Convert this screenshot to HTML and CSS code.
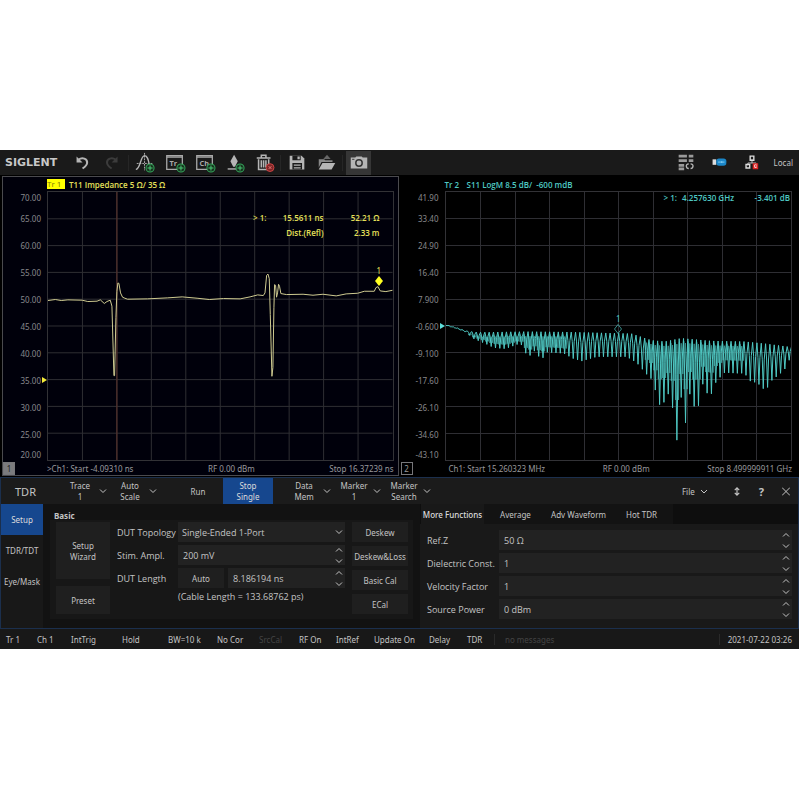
FILE: index.html
```html
<!DOCTYPE html>
<html lang="en">
<head>
    <meta charset="UTF-8">
    <meta name="viewport" content="width=device-width, initial-scale=1.0">
    <title>SIGLENT TDR</title>
    <link rel="stylesheet" href="styles.css">
</head>
<body>
    <!-- shared icon shapes -->
    <svg class="defs" width="0" height="0" aria-hidden="true">
        <symbol id="down" viewBox="0 0 8 8"><path d="M1 2.5 4 5.5 7 2.5" fill="none" stroke="currentColor"/></symbol>
        <symbol id="up" viewBox="0 0 8 8"><path d="M1 5.5 4 2.5 7 5.5" fill="none" stroke="currentColor"/></symbol>
        <symbol id="plus" viewBox="0 0 10 10"><circle cx="5" cy="5" r="4" fill="#16331f" stroke="#35a65a"/><path d="M5 2.500V7.500M2.500 5H7.500" stroke="#4cc774"/></symbol>
    </svg>

    <div class="app">
        <header class="toolbar">
            <span class="logo">SIGLENT</span>
            <button class="tool" aria-label="Undo"><svg viewBox="0 0 24 24"><path d="M5 5V11.500H11.500Z" fill="#b5b5b5"/><path d="M7 8.500C11 5.500 17 7 16.500 12 16.300 14.500 14.500 16 11.500 18" fill="none" stroke="#b5b5b5" stroke-width="2.200"/></svg></button>
            <button class="tool" aria-label="Redo"><svg viewBox="0 0 24 24"><path d="M17 5V11.500H10.500Z" fill="#3c3c3c"/><path d="M15 8.500C11 5.500 5 7 5.500 12 5.700 14.500 7.500 16 10.500 18" fill="none" stroke="#3c3c3c" stroke-width="2.200"/></svg></button>
            <span class="sep"></span>
            <button class="tool" aria-label="Add trace"><svg viewBox="0 0 24 24"><path d="M2 19C7 19 7 4 11.500 4S16 13 18 19" fill="none" stroke="#b5b5b5" stroke-width="1.500"/><path d="M11.500 1V20M3 12.500H20" stroke="#b5b5b5" stroke-dasharray="2 1"/><use href="#plus" x="12" y="12" width="11" height="11"/></svg></button>
            <button class="tool" aria-label="Add trace window"><svg viewBox="0 0 24 24"><path d="M3 4H20V19H3ZM3 5.500H20" fill="none" stroke="#aaa" stroke-width="1.400"/><text x="6" y="15" class="icon-text">Tr</text><use href="#plus" x="13" y="12" width="11" height="11"/></svg></button>
            <button class="tool" aria-label="Add channel window"><svg viewBox="0 0 24 24"><path d="M3 4H20V19H3ZM3 5.500H20" fill="none" stroke="#aaa" stroke-width="1.400"/><text x="6" y="15" class="icon-text">Ch</text><use href="#plus" x="13" y="12" width="11" height="11"/></svg></button>
            <button class="tool" aria-label="Add marker"><svg viewBox="0 0 24 24"><path d="M11 3 15 10 12 16H10L7 10Z" fill="#b5b5b5"/><path d="M4 18.500H14" stroke="#b5b5b5" stroke-width="1.500"/><use href="#plus" x="12" y="12" width="11" height="11"/></svg></button>
            <button class="tool" aria-label="Delete"><svg viewBox="0 0 24 24"><path d="M3 6.500H18M8 6V3.500H13V6M5 8V19H16V8M8 9V17M10.500 9V17M13 9V17" fill="none" stroke="#b5b5b5" stroke-width="1.700"/><circle cx="17.500" cy="17" r="4.300" fill="#7e2626" stroke="#d14747"/><path d="M16 15.500 19 18.500M19 15.500 16 18.500" stroke="#ee7777"/></svg></button>
            <span class="sep"></span>
            <button class="tool" aria-label="Save"><svg viewBox="0 0 24 24"><path d="M4 4H17L20 7V19H4Z" fill="#b5b5b5"/><path d="M7 4H16V9H7ZM7 12H17.500V19H7Z" fill="#1a1a1a"/><path d="M12.500 5H15V8H12.500ZM8.500 13.500H16V15H8.500ZM8.500 16.500H16V18H8.500Z" fill="#b5b5b5"/></svg></button>
            <button class="tool" aria-label="Open"><svg viewBox="0 0 24 24"><path d="M3 8H9L10 9H18V11H6L3 17Z" fill="#888"/><path d="M7 12H21L17 19H3Z" fill="#b5b5b5"/><path d="M8 7.500 12 3 16 7.500Z" fill="#666"/></svg></button>
            <span class="sep"></span>
            <button class="tool active" aria-label="Screenshot"><svg viewBox="0 0 24 24"><path d="M3 6H8L9 5H15L16 6H21V18H3Z" fill="#b5b5b5"/><circle cx="12" cy="12" r="3.500" fill="#b5b5b5" stroke="#333" stroke-width="1.600"/><path d="M4.500 8H7" stroke="#333"/></svg></button>
            <div class="tray">
                <svg viewBox="0 0 24 24"><path d="M4 4.500H13M4 9.500H13M4 14.500H10M4 18.500H10M15 4.500H20M15 9.500H20" stroke="#9a9a9a" stroke-width="3"/><path d="M15 13C11 13 12 18 15 18M17 13C21 13 20 18 17 18" fill="none" stroke="#b5b5b5" stroke-width="1.500"/></svg>
                <svg viewBox="0 0 24 24"><rect x="5" y="8" width="4" height="6" fill="#ddd"/><rect x="9" y="7" width="11" height="8" rx="3" fill="#1b87c9"/><path d="M11 11H18M15 10V12" stroke="#8ad0f5"/></svg>
                <svg viewBox="0 0 24 24"><path d="M12 8V12M7.500 15V12H16.500V15" fill="none" stroke="#ccc"/><path d="M10 4.500H14V9H10ZM5.500 13.500H9.500V17.500H5.500Z" fill="none" stroke="#ddd" stroke-width="1.500"/><path d="M13.500 13H18V18H13.500Z" fill="#fff" stroke="#d22" stroke-width="1.500"/><path d="M14.500 13.500 17.500 17M17.500 13.500 14.500 17" stroke="#d22"/></svg>
                <span>Local</span>
            </div>
        </header>

        <main class="windows">
            <section class="window selected">
                <div class="trace-title yellow"><mark>Tr 1</mark><span>T11 Impedance 5 Ω/ 35 Ω</span></div>
                <div class="axis"><span>70.00</span><span>65.00</span><span>60.00</span><span>55.00</span><span>50.00</span><span>45.00</span><span>40.00</span><span>35.00</span><span>30.00</span><span>25.00</span><span>20.00</span></div>
                <div class="plot">
                    <svg viewBox="0 0 1040 810" preserveAspectRatio="none">
                        <path class="grid" d="M104 0V810M208 0V810M312 0V810M416 0V810M520 0V810M624 0V810M728 0V810M832 0V810M936 0V810M0 81H1040M0 162H1040M0 243H1040M0 324H1040M0 405H1040M0 486H1040M0 567H1040M0 648H1040M0 729H1040"/>
                        <path class="zero" d="M208 0V810"/>
                        <path class="trace yellow" d="M0 328 22 325 40 328 60 326 103 327 120 331 148 330 158 326 170 337 178 331 188 327 193 345 199 555 201 555 205 380 208 300 211 275 214 276 219 305 225 318 232 321 240 324 300 323 360 320 405 317 450 321 487 325 530 322 580 323 610 317 633 311 650 313 655 305 660 252 664 248 668 262 671 370 676 557 679 530 682 350 684 280 687 282 690 318 693 305 696 279 699 285 703 307 720 310 770 309 800 312 830 309 870 314 900 308 935 306 955 300 985 300 990 289 996 286 1003 299 1020 301 1040 297"/>
                    </svg>
                    <i class="ref" style="top: 70%"></i>
                    <table class="readout yellow">
                        <tr><td>&gt; 1:</td><td>15.5611 ns</td><td>52.21 Ω</td></tr>
                        <tr><td></td><td>Dist.(Refl)</td><td>2.33 m</td></tr>
                    </table>
                    <div class="marker yellow" style="left: 96%; top: 35%"><span>1</span><svg viewBox="0 0 8 10"><path d="M4 0 8 5 4 10 0 5Z" fill="#ff2"/></svg></div>
                </div>
                <span class="number">1</span>
                <div class="sweep"><span>&gt;Ch1: Start -4.09310 ns</span><span>RF 0.00 dBm</span><span>Stop 16.37239 ns</span></div>
            </section>

            <section class="window">
                <div class="trace-title cyan"><b>Tr 2</b><span>S11 LogM 8.5 dB/&nbsp; -600 mdB</span></div>
                <div class="axis"><span>41.90</span><span>33.40</span><span>24.90</span><span>16.40</span><span>7.900</span><span>-0.600</span><span>-9.100</span><span>-17.60</span><span>-26.10</span><span>-34.60</span><span>-43.10</span></div>
                <div class="plot">
                    <svg viewBox="0 0 1040 810" preserveAspectRatio="none">
                        <path class="grid" d="M104 0V810M208 0V810M312 0V810M416 0V810M520 0V810M624 0V810M728 0V810M832 0V810M936 0V810M0 81H1040M0 162H1040M0 243H1040M0 324H1040M0 405H1040M0 486H1040M0 567H1040M0 648H1040M0 729H1040"/>
                        <path class="trace cyan dim" id="ripple2"/>
                        <path class="trace cyan" id="ripple1"/>
                    </svg>
                    <i class="ref cyan" style="top: 50%"></i>
                    <table class="readout wide cyan">
                        <tr><td>&gt; 1:</td><td>4.257630 GHz</td><td>-3.401 dB</td></tr>
                    </table>
                    <div class="marker cyan" style="left: 50%; top: 53%"><span>1</span><svg viewBox="0 0 8 10"><path d="M4 .5 7.500 5 4 9.500 .5 5Z" fill="none" stroke="currentColor" stroke-width=".7"/></svg></div>
                </div>
                <span class="number">2</span>
                <div class="sweep second"><span>Ch1: Start 15.260323 MHz</span><span>RF 0.00 dBm</span><span>Stop 8.499999911 GHz</span></div>
            </section>
        </main>

        <section class="panel">
            <div class="menu">
                <h1>TDR</h1>
                <button class="menu-btn drop"><span>Trace<br>1</span><svg><use href="#down"/></svg></button>
                <button class="menu-btn drop"><span>Auto<br>Scale</span><svg><use href="#down"/></svg></button>
                <button class="menu-btn spaced">Run</button>
                <button class="menu-btn on">Stop<br>Single</button>
                <button class="menu-btn drop spaced"><span>Data<br>Mem</span><svg><use href="#down"/></svg></button>
                <button class="menu-btn drop"><span>Marker<br>1</span><svg><use href="#down"/></svg></button>
                <button class="menu-btn drop"><span>Marker<br>Search</span><svg><use href="#down"/></svg></button>
                <div class="menu-right">
                    <button class="file">File <svg><use href="#down"/></svg></button>
                    <button aria-label="Resize"><svg viewBox="0 0 8 10"><path d="M4 1V9M1.500 3.500 4 1 6.500 3.500M1.500 6.500 4 9 6.500 6.500" fill="none" stroke="currentColor" stroke-width="1.300"/></svg></button>
                    <button class="help">?</button>
                    <button aria-label="Close"><svg viewBox="0 0 8 8"><path d="M0 0 8 8M8 0 0 8" stroke="currentColor"/></svg></button>
                </div>
            </div>

            <div class="panel-body">
                <nav class="side">
                    <button class="on">Setup</button>
                    <button>TDR/TDT</button>
                    <button>Eye/Mask</button>
                </nav>

                <div class="basic">
                    <h2>Basic</h2>
                    <div class="basic-cols">
                        <div class="wizard">
                            <button class="btn tall">Setup<br>Wizard</button>
                            <button class="btn">Preset</button>
                        </div>
                        <div class="form">
                            <label for="topology">DUT Topology</label>
                            <div class="field">
                                <select id="topology"><option>Single-Ended 1-Port</option></select>
                                <svg class="select-arrow"><use href="#down"/></svg>
                            </div>
                            <label for="ampl">Stim. Ampl.</label>
                            <div class="field">
                                <input id="ampl" type="text" value="200 mV">
                                <div class="spin"><button aria-label="Increase"><svg><use href="#up"/></svg></button><button aria-label="Decrease"><svg><use href="#down"/></svg></button></div>
                            </div>
                            <label for="length">DUT Length</label>
                            <div class="length">
                                <button class="btn">Auto</button>
                                <div class="field">
                                    <input id="length" type="text" value="8.186194 ns">
                                    <div class="spin"><button aria-label="Increase"><svg><use href="#up"/></svg></button><button aria-label="Decrease"><svg><use href="#down"/></svg></button></div>
                                </div>
                            </div>
                            <p class="cable">(Cable Length = 133.68762 ps)</p>
                        </div>
                        <div class="cals">
                            <button class="btn">Deskew</button>
                            <button class="btn">Deskew&amp;Loss</button>
                            <button class="btn">Basic Cal</button>
                            <button class="btn">ECal</button>
                        </div>
                    </div>
                </div>

                <div class="more">
                    <div class="tabs">
                        <button class="on">More Functions</button>
                        <button>Average</button>
                        <button>Adv Waveform</button>
                        <button>Hot TDR</button>
                    </div>
                    <div class="form">
                        <label for="refz">Ref.Z</label>
                        <div class="field">
                            <input id="refz" type="text" value="50 Ω">
                            <div class="spin"><button aria-label="Increase"><svg><use href="#up"/></svg></button><button aria-label="Decrease"><svg><use href="#down"/></svg></button></div>
                        </div>
                        <label for="diel">Dielectric Const.</label>
                        <div class="field">
                            <input id="diel" type="text" value="1">
                            <div class="spin"><button aria-label="Increase"><svg><use href="#up"/></svg></button><button aria-label="Decrease"><svg><use href="#down"/></svg></button></div>
                        </div>
                        <label for="velocity">Velocity Factor</label>
                        <div class="field">
                            <input id="velocity" type="text" value="1">
                            <div class="spin"><button aria-label="Increase"><svg><use href="#up"/></svg></button><button aria-label="Decrease"><svg><use href="#down"/></svg></button></div>
                        </div>
                        <label for="power">Source Power</label>
                        <div class="field">
                            <input id="power" type="text" value="0 dBm">
                            <div class="spin"><button aria-label="Increase"><svg><use href="#up"/></svg></button><button aria-label="Decrease"><svg><use href="#down"/></svg></button></div>
                        </div>
                    </div>
                </div>
            </div>
        </section>

        <footer class="status">
            <span>Tr 1</span><span>Ch 1</span><span>IntTrig</span><span>Hold</span><span>BW=10 k</span><span>No Cor</span><span class="off">SrcCal</span><span>RF On</span><span>IntRef</span><span>Update On</span><span>Delay</span><span>TDR</span>
            <span class="off message">no messages</span>
            <time>2021-07-22 03:26</time>
        </footer>
    </div>
    <script src="script.js"></script>
</body>
</html>
```

FILE: styles.css
```css
* {
    box-sizing: border-box;
    margin: 0;
    padding: 0;
}
body {
    min-height: 100vh;
    display: flex;
    flex-direction: column;
    justify-content: center;
    background-color: #fff;
    font-family: "Noto Sans", "Open Sans", sans-serif;
    font-size: 8px;
    line-height: 11px;
    color: #c4c4c4;
}
button, input, select {
    font: inherit;
    color: inherit;
    background: none;
    border: none;
    border-radius: 0;
    outline: none;
}
button {
    cursor: pointer;
}
svg {
    display: block;
    flex: none;
    width: 8px;
    height: 8px;
}
.defs {
    position: absolute;
    width: 0;
    height: 0;
}
.app {
    background-color: #000;
}

/* top toolbar */
.toolbar {
    display: flex;
    align-items: center;
    gap: 5px;
    height: 25px;
    padding: 0 6px 0 5px;
    background-color: #1a1a1a;
}
.logo {
    width: 60px;
    font-family: "DejaVu Sans", sans-serif;
    font-size: 11px;
    font-weight: bold;
    color: #c8c8c8;
}
.tool {
    display: flex;
    align-items: center;
    justify-content: center;
    width: 25px;
    height: 24px;
}
.tool.active {
    background-color: #363636;
}
.tool svg, .tray svg {
    width: 22px;
    height: 22px;
}
.icon-text {
    font-family: "Open Sans", sans-serif;
    font-size: 8px;
    font-weight: bold;
    fill: #aaa;
}
.sep {
    width: 1px;
    height: 16px;
    margin: 0 -2px;
    background-color: #262626;
}
.tray {
    display: flex;
    align-items: center;
    margin-left: auto;
}
.tray svg {
    margin-right: 11px;
}

/* trace windows */
.windows {
    display: grid;
    grid-template-columns: 1fr 1fr;
    gap: 1px;
    padding: 1px 3px 1px 2px;
}
.window {
    display: grid;
    grid-template-columns: 44px 1fr;
    grid-template-rows: 14px 270px 14px;
    padding-right: 3px;
    border: 1px solid transparent;
    min-width: 0;
}
.window.selected {
    padding-right: 4px;
    background-color: #00000b;
    border-color: #4a4a4e;
}
.yellow {
    color: #e6e05a;
}
.cyan {
    color: #4fc9c4;
}
.trace-title {
    grid-column: 2;
    display: flex;
    align-items: center;
    font-family: "Open Sans", sans-serif;
    font-weight: 600;
    white-space: nowrap;
}
.trace-title mark {
    width: 18px;
    margin-right: 4px;
    font-weight: normal;
    line-height: 10px;
    background-color: #ff0;
    color: #77760a;
}
.trace-title b {
    width: 22px;
    font-weight: 600;
}
.axis {
    display: flex;
    flex-direction: column;
    padding-right: 6px;
    text-align: right;
    color: #88888c;
}
.axis span {
    flex: 2;
    display: flex;
    align-items: center;
    justify-content: flex-end;
}
.axis span:first-child, .axis span:last-child {
    flex: 1;
}
.plot {
    position: relative;
    border: 1px solid #323236;
}
.plot > svg {
    width: 100%;
    height: 100%;
}
.plot path {
    vector-effect: non-scaling-stroke;
}
.grid {
    stroke: #2e2e33;
    fill: none;
    shape-rendering: crispEdges;
}
.zero {
    stroke: #5c342d;
    shape-rendering: crispEdges;
}
.trace {
    fill: none;
    stroke: currentColor;
    stroke-width: 1px;
    stroke-linejoin: round;
}
.trace.yellow {
    color: #cfcb91;
}
.trace.dim {
    opacity: .7;
}
.ref {
    position: absolute;
    left: -6px;
    margin-top: -3px;
    border: 3px solid transparent;
    border-left: 5px solid #f4ec3a;
    border-right: none;
}
.ref.cyan {
    border-left-color: #5fe0dc;
}
.readout {
    position: absolute;
    top: 18px;
    right: 13px;
    border-spacing: 0;
    font-family: "Open Sans", sans-serif;
    font-weight: 600;
    text-align: right;
    white-space: nowrap;
}
.readout td {
    height: 15px;
}
.readout td:nth-child(2) {
    width: 57px;
}
.readout td:nth-child(3) {
    width: 56px;
}
.readout.wide {
    top: -2px;
    right: 1px;
}
.marker {
    position: absolute;
    display: flex;
    flex-direction: column;
    align-items: center;
    width: 8px;
    margin-left: -4px;
    margin-top: -21px;
}
.marker svg {
    height: 10px;
}
.number {
    align-self: end;
    width: 12px;
    height: 13px;
    border: 1px solid #77777a;
    line-height: 11px;
    text-align: center;
    color: #999;
}
.selected .number {
    background-color: #7b7b7e;
    color: #222;
}
.sweep {
    display: flex;
    align-items: center;
    justify-content: space-between;
    white-space: nowrap;
    color: #98989c;
}
.sweep.second {
    padding-left: 4px;
}

/* TDR panel */
.panel {
    background-color: #121212;
    border: 1px solid #1b2f4d;
}
.menu {
    display: flex;
    height: 26px;
    background-color: #1b1b1b;
}
h1 {
    width: 60px;
    padding-left: 14px;
    font-size: 11px;
    font-weight: normal;
    line-height: 27px;
}
.menu-btn {
    width: 50px;
}
.menu-btn.spaced {
    margin-left: 12px;
}
.drop {
    display: flex;
    align-items: center;
}
.drop span {
    width: 38px;
}
.on {
    background-color: #16478e;
    color: #dcdcdc;
}
.menu-right {
    display: flex;
    align-items: center;
    gap: 18px;
    margin-left: auto;
    padding-right: 8px;
}
.menu-right svg {
    width: 8px;
    height: 9px;
}
.file {
    display: flex;
    align-items: center;
    gap: 5px;
    margin-right: 7px;
}
.help {
    font-size: 11px;
    font-weight: bold;
}
.panel-body {
    display: flex;
    height: 124px;
}
.side {
    display: flex;
    flex-direction: column;
    width: 42px;
    background-color: #181818;
}
.side button {
    height: 31px;
}
.btn {
    height: 20px;
    background-color: #1f1f1f;
}
.basic {
    width: 377px;
    padding: 7px 7px 6px;
}
h2 {
    padding-left: 4px;
    font-size: 8px;
    line-height: 9px;
}
.basic-cols {
    display: flex;
    gap: 7px;
    padding: 2px 5px 5px 6px;
    background-color: #171717;
}
.wizard {
    display: flex;
    flex-direction: column;
    gap: 7px;
    width: 54px;
}
.wizard .btn {
    height: 28px;
}
.wizard .tall {
    height: 57px;
}
.form {
    display: grid;
    grid-template-columns: 61px 1fr;
    grid-auto-rows: 20px;
    row-gap: 3px;
    align-content: start;
    align-items: center;
    flex: 1;
    font-family: "Open Sans", sans-serif;
    font-size: 9px;
    white-space: nowrap;
}
.field {
    display: flex;
    flex: 1;
    position: relative;
    height: 20px;
    min-width: 0;
    background-color: #222;
}
.field input, .field select {
    flex: 1;
    width: 100%;
    min-width: 0;
    padding-left: 5px;
    appearance: none;
}
.field select {
    padding-left: 4px;
}
.select-arrow {
    position: absolute;
    right: 2px;
    top: 6px;
    pointer-events: none;
}
.spin {
    display: flex;
    flex-direction: column;
    justify-content: space-between;
}
.spin button {
    width: 10px;
    height: 9px;
}
.length {
    display: flex;
    gap: 4px;
}
.length .btn {
    width: 46px;
    font-family: "Noto Sans", sans-serif;
    font-size: 8px;
}
.cable {
    grid-column: 2;
    align-self: start;
}
.cals {
    display: flex;
    flex-direction: column;
    gap: 4px;
    width: 56px;
}
.cals .btn {
    white-space: nowrap;
}

/* right side of the panel */
.more {
    flex: 1;
    min-width: 0;
    background-color: #191919;
}
.tabs {
    display: flex;
    height: 20px;
    padding-left: 1px;
    background-color: #0e0e0e;
}
.tabs button {
    width: 63px;
    background-color: #131313;
    white-space: nowrap;
}
.tabs .on {
    background-color: #191919;
    font-weight: 500;
}
.more .form {
    grid-template-columns: 72px 1fr;
    padding: 6px 6px 0 7px;
}

/* bottom status bar */
.status {
    display: grid;
    grid-template-columns: 31px 34px 51px 46px 49px 42px 40px 37px 38px 55px 38px 27px 1fr auto;
    align-items: center;
    height: 20px;
    padding: 0 7px 0 6px;
    background-color: #181818;
    white-space: nowrap;
}
.off {
    color: #444;
}
.message {
    padding-left: 10px;
    border-left: 1px solid #2a2a2a;
}
time {
    padding-left: 8px;
    border-left: 1px solid #2a2a2a;
}
```

FILE: script.js
```js
// envelopes of the S11 ripple, in plot units (1040 x 810)
const tops = [[0, 402], [30, 410], [64, 420], [104, 424], [244, 422], [364, 423], [484, 426], [564, 428], [624, 448], [664, 452], [714, 442], [804, 450], [904, 452], [964, 458], [1040, 468]]
const dips = [[0, 402], [30, 411], [64, 426], [84, 444], [124, 461], [144, 471], [179, 474], [214, 461], [231, 463], [247, 506], [260, 480], [273, 482], [286, 514], [300, 484], [354, 488], [384, 504], [409, 511], [454, 498], [544, 498], [574, 516], [604, 551], [624, 571], [639, 640], [652, 649], [665, 606], [678, 622], [695, 750], [708, 621], [721, 698], [734, 611], [747, 648], [760, 646], [773, 581], [786, 608], [799, 610], [814, 571], [839, 546], [874, 548], [899, 548], [914, 571], [939, 578], [952, 594], [965, 596], [979, 571], [1004, 551], [1029, 526], [1040, 478]]

function at(list, x) {
    for (let i = 1; i < list.length; i++) {
        if (x <= list[i][0]) {
            const [x0, y0] = list[i - 1]
            const [x1, y1] = list[i]
            return y0 + (y1 - y0) * (x - x0) / (x1 - x0)
        }
    }
    return list[list.length - 1][1]
}

const step = 13
let main = 'M0 402'
let second = ''
for (let x = 6; x < 1034; x += step) {
    const top = at(tops, x)
    const dip = at(dips, x)
    main += `L${x - 6} ${top}L${x - 3} ${top + (dip - top) * .35}L${x} ${dip}L${x + 3} ${top + (dip - top) * .35}`
    // faster ripple that fills the left part and the deep part
    if (x > 60 && x < 370 || x > 600 && x < 900) {
        const low = top + (dip - top) * (x < 400 ? .75 : .6)
        second += `M${x - 5} ${top + 8}L${x - 4} ${low}L${x} ${top + 14}L${x + 5} ${low}L${x + 7} ${top + 8}`
    }
}
main += 'L1040 468'
document.getElementById('ripple1').setAttribute('d', main)
document.getElementById('ripple2').setAttribute('d', second)
```
